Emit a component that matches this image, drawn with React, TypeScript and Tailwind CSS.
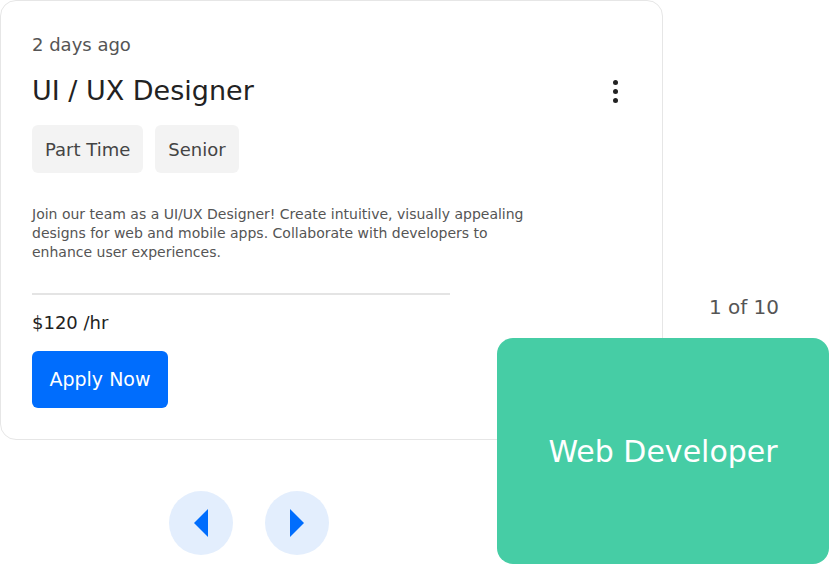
import React from "react";

export default function App() {
  return (
    <div className="relative w-[829px] h-[564px] bg-white overflow-hidden" style={{ fontFamily: "'DejaVu Sans', 'Noto Sans', sans-serif" }}>
      <div className="w-[663px] h-[440px] rounded-[16px] border border-[#e6e6e6] bg-white pl-[31px] pr-[40px] pt-[32px]">
        <div className="text-[18px] leading-[24px] text-[#555]">2 days ago</div>
        <div className="mt-[17px] flex items-center justify-between">
          <h1 className="text-[27px] leading-[34px] text-[#222]">UI / UX Designer</h1>
          <div className="flex flex-col gap-[4px] mr-[4px]">
            <span className="w-[5px] h-[5px] rounded-full bg-[#222]"></span>
            <span className="w-[5px] h-[5px] rounded-full bg-[#222]"></span>
            <span className="w-[5px] h-[5px] rounded-full bg-[#222]"></span>
          </div>
        </div>
        <div className="mt-[17px] flex gap-[12px]">
          <span className="h-[48px] px-[13px] flex items-center rounded-[6px] bg-[#f3f3f3] text-[18px] text-[#444]">Part Time</span>
          <span className="h-[48px] px-[13px] flex items-center rounded-[6px] bg-[#f3f3f3] text-[18px] text-[#444]">Senior</span>
        </div>
        <p className="mt-[32px] w-[505px] text-[14px] leading-[19px] text-[#555]">
          Join our team as a UI/UX Designer! Create intuitive, visually appealing designs for web and mobile apps. Collaborate with developers to enhance user experiences.
        </p>
        <div className="mt-[31px] w-[418px] h-[2px] bg-[#e4e4e4]"></div>
        <div className="mt-[16px] text-[18px] leading-[24px] text-[#222]">$120 /hr</div>
        <button className="mt-[16px] w-[136px] h-[57px] rounded-[6px] bg-[#006dfd] text-white text-[19px]">Apply Now</button>
      </div>
      <div className="mt-[51px] flex gap-[32px] pl-[169px]">
        <button className="w-[64px] h-[64px] rounded-full bg-[#e3eefd] flex items-center justify-center">
          <svg width="16" height="28" viewBox="0 0 16 28"><path d="M15 0 V28 L1 14 Z" fill="#006dfd" /></svg>
        </button>
        <button className="w-[64px] h-[64px] rounded-full bg-[#e3eefd] flex items-center justify-center">
          <svg width="16" height="28" viewBox="0 0 16 28"><path d="M1 0 V28 L15 14 Z" fill="#006dfd" /></svg>
        </button>
      </div>
      <div className="absolute left-[700px] top-[293px] w-[88px] text-center text-[20px] leading-[28px] text-[#555]">1 of 10</div>
      <div className="absolute left-[497px] top-[338px] w-[332px] h-[226px] rounded-[16px] bg-[#46cda5] flex items-center justify-center">
        <span className="text-white text-[30px]">Web Developer</span>
      </div>
    </div>
  );
}
